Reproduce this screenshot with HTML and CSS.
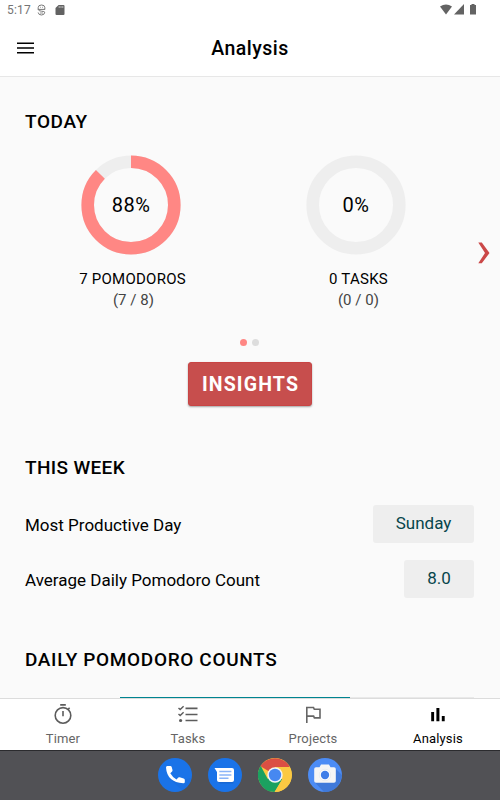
FILE: index.html
```html
<!DOCTYPE html>
<html lang="en">
	<head>
		<meta charset="utf-8"/>
		<title>Analysis</title>
		<meta name="viewport" content="width=device-width, initial-scale=1"/>
		<link rel="stylesheet" href="styles.css">
	</head>
	<body>
		<div class="status-bar">
			<span class="time">5:17</span>
			<svg class="status-debug" width="9" height="12" viewBox="0 0 9 12" fill="none" stroke="#777"><path d="M1.2 5V3.5Q1.2 1 4.5 1T7.8 3.5V5M.8 5.4h7.4M1.2 5.5Q1.5 7 4.5 7.2T7.8 8.2Q7.5 11 4.5 11T1.2 8.5"/><path d="M3 3.3h.8M5.2 3.3h.8M3 9h3" stroke-width=".8"/></svg>
			<svg class="status-card" width="10" height="12" viewBox="0 0 10 12"><path fill="#626262" d="M3.6 1H8.5Q9.5 1 9.5 2V10Q9.5 11 8.5 11H1.5Q.5 11 .5 10V4Z"/><path stroke="#ddd" stroke-width=".7" d="M4.2 2v2M6 2v2M7.8 2v2"/></svg>
			<div class="status-right">
				<svg width="36" height="12" viewBox="0 0 36 12" fill="#636363"><path d="M0 2.6Q6 -1.6 12 2.6L6 10.5Z"/><path d="M24 0V10.5H14Z"/><path d="M31.5 0h3v1H36V10.5H30V1h1.5Z"/></svg>
			</div>
		</div>
		<div class="header">
			<svg class="menu-icon" width="17" height="12" viewBox="0 0 17 12"><path stroke="#000" stroke-width="1.5" d="M0 1.2h17M0 6h17M0 10.8h17"/></svg>
			<h1>Analysis</h1>
		</div>
		<div class="content">
			<h2 class="today-title">TODAY</h2>
			<div class="today">
				<div class="stat">
					<div class="ring">
						<svg width="100" height="100" viewBox="0 0 100 100" fill="none" stroke-width="12.6"><circle cx="50" cy="50" r="43.3" stroke="#eee"/><circle cx="50" cy="50" r="43.3" stroke="#ff8784" pathLength="100" stroke-dasharray="87.5 100" transform="rotate(-90 50 50)"/></svg>
						<span class="percent">88%</span>
					</div>
					<p class="stat-name">7 POMODOROS</p>
					<p class="stat-count">(7 / 8)</p>
				</div>
				<div class="stat">
					<div class="ring">
						<svg width="100" height="100" viewBox="0 0 100 100" fill="none" stroke-width="12.6"><circle cx="50" cy="50" r="43.3" stroke="#eee"/></svg>
						<span class="percent">0%</span>
					</div>
					<p class="stat-name">0 TASKS</p>
					<p class="stat-count">(0 / 0)</p>
				</div>
				<svg class="next" width="12" height="22" viewBox="0 0 12 22"><path fill="#cb4848" d="M.3.5H3.8L11.5 11L3.8 21.3H.3L7 11Z"/></svg>
			</div>
			<div class="dots"><span class="dot active"></span><span class="dot"></span></div>
			<button class="insights">INSIGHTS</button>
			<h2 class="week-title">THIS WEEK</h2>
			<div class="row">
				<span class="row-name">Most Productive Day</span>
				<span class="value day">Sunday</span>
			</div>
			<div class="row">
				<span class="row-name">Average Daily Pomodoro Count</span>
				<span class="value count">8.0</span>
			</div>
			<h2 class="daily-title">DAILY POMODORO COUNTS</h2>
			<div class="chart"><div class="chart-line"></div><div class="chart-rest"></div></div>
		</div>
		<div class="tabs">
			<div class="tab">
				<svg width="24" height="24" viewBox="0 0 24 24" fill="none" stroke="#5c5c5c" stroke-width="1.6"><circle cx="12" cy="13.4" r="7.8"/><path d="M9.2 2.9h5.6M12 9v5.2M17.2 7.2l1.4-1.4"/></svg>
				<span>Timer</span>
			</div>
			<div class="tab">
				<svg width="24" height="24" viewBox="0 0 24 24" fill="none" stroke="#5c5c5c" stroke-width="1.6"><path d="M9.5 6.4h12M9.5 12.5h12M9.5 18.5h12"/><path d="M2.5 6l1.7 1.6L7.6 4.3M2.5 12l1.7 1.6L7.6 10.3" stroke-width="1.4"/><circle cx="4.6" cy="18.5" r="1.6" fill="#5c5c5c" stroke="none"/></svg>
				<span>Tasks</span>
			</div>
			<div class="tab">
				<svg width="24" height="24" viewBox="0 0 24 24" fill="none" stroke="#666" stroke-width="1.6"><path d="M5.8 21V5.5H12.5L13.3 7.3H19V15.9H13.4L12.6 14.1H5.8"/></svg>
				<span>Projects</span>
			</div>
			<div class="tab selected">
				<svg width="24" height="24" viewBox="0 0 24 24"><path d="M5.2 10h2.9v9.3H5.2zM10.4 6h3v13.3h-3zM15.8 14h2.9v5.3h-2.9z"/></svg>
				<span>Analysis</span>
			</div>
		</div>
		<div class="dock">
			<svg width="34" height="34" viewBox="0 0 34 34"><circle cx="17" cy="17" r="17" fill="#1a73e8"/><path fill="#1765cb" d="M11 20L24 32Q32 28 33 20L25 22Z" opacity=".25"/><path fill="#fff" d="M9.2 8H12.3Q13.4 8 13.7 9L14.5 12Q14.7 12.8 14.1 13.4L12.3 15.2Q14.5 19.2 18.5 21.4L20.3 19.6Q20.9 19 21.7 19.2L25.6 20.4Q26.8 20.8 26.8 22V24Q26.8 25.4 25.3 25.3Q9 24.2 8 9.5Q8 8 9.2 8Z"/></svg>
			<svg width="34" height="34" viewBox="0 0 34 34"><circle cx="17" cy="17" r="17" fill="#1a73e8"/><path fill="#155cbc" opacity=".5" d="M9 23L12 25.4H25L26 23Z"/><path fill="#fff" d="M6.5 10H24Q26 10 26 12V22Q26 24 24 24H11Q9 24 9 22V14Z"/><path stroke="#8ab4f8" stroke-width="1.4" d="M11.3 13.5H23.4M11.3 17H23.4M11.3 20.3H20.5"/></svg>
			<svg width="34" height="34" viewBox="0 0 34 34"><circle cx="17" cy="17" r="17" fill="#fbc942"/><path fill="#db4f43" d="M17 17L2.5 8.2A17 17 0 0 1 31.6 8.5Z"/><path fill="#1ba160" d="M2.7 7.7A17 17 0 0 0 16.5 34L24.2 21.2L17 17L9.6 20.8Z"/><path fill="#fbc942" d="M24.4 21.2L16.7 34A17 17 0 0 0 31.7 9H17V17Z"/><circle cx="17" cy="17" r="7.7" fill="#f3f5f4"/><circle cx="17" cy="17" r="6.2" fill="#4688f1"/></svg>
			<svg width="34" height="34" viewBox="0 0 34 34"><circle cx="17" cy="17" r="17" fill="#4c8cf5"/><path fill="#356ac3" opacity=".55" d="M6.5 24L16 34Q31 34 34 17L27.5 10.5V24Z"/><path fill="#f5f5f5" d="M8 9.2H11.5L13 6.5H21L22.5 9.2H26Q27.8 9.2 27.8 11V23Q27.8 24.8 26 24.8H8Q6.2 24.8 6.2 23V11Q6.2 9.2 8 9.2Z"/><circle cx="17" cy="17" r="5.7" fill="#fff" stroke="#e1e4e8" stroke-width=".6"/><circle cx="17" cy="17" r="4.2" fill="#3f7ee8"/></svg>
		</div>
	</body>
</html>
```
FILE: styles.css
```css
body{margin: 0px;width: 500px;height: 800px;overflow: hidden;display: flex;flex-direction: column;background: #fafafa;color: #000;font-family: Roboto, sans-serif;}
h1, h2, p{margin: 0px;}
svg{display: block;flex: none;}
.status-bar{display: flex;align-items: center;box-sizing: border-box;height: 20px;padding: 0 24px 0 7px;background: #fff;}
.time{width: 30px;font-size: 12px;letter-spacing: 0.2px;color: #757575;}
.status-debug{margin-right: 9px;}
.status-right{margin-left: auto;}
.header{display: grid;grid-template-columns: 50px 1fr 50px;align-items: center;height: 56px;background: #fff;border-bottom: 1px solid #e7e7e7;}
.menu-icon{margin-left: 17px;}
.header h1{padding-top: 1px;font-size: 19.5px;line-height: 24px;font-weight: 500;letter-spacing: 0.5px;text-align: center;}
.content{flex: 1;min-height: 0px;display: flex;flex-direction: column;padding: 32px 26px 0 25px;overflow: hidden;}
.content > *{flex-shrink: 0;}
h2{font-size: 19px;line-height: 24px;font-weight: 500;white-space: nowrap;}
.today-title{padding-top: 1px;letter-spacing: 0.6px;}
.today{position: relative;display: flex;height: 178px;margin: 21px -26px 0 -25px;padding: 0 18px 0 20px;}
.stat{width: 225px;display: flex;flex-direction: column;align-items: center;}
.ring{display: grid;width: 100px;height: 100px;margin-right: 3px;}
.ring svg, .percent{grid-area: 1 / 1;}
.percent{align-self: center;justify-self: center;font-size: 20px;letter-spacing: 0.5px;}
.stat-name{margin: 14px 0 0 0;font-size: 15px;line-height: 20px;letter-spacing: 0.25px;}
.stat:nth-child(2) .stat-name{margin-left: 2px;}
.stat-count{margin-left: 2px;font-size: 15px;line-height: 22px;letter-spacing: 0.05px;color: #444;}
.next{position: absolute;left: 478px;top: 87px;}
.dots{display: flex;justify-content: center;gap: 5px;margin-top: 6px;}
.dot{width: 7px;height: 7px;border-radius: 50%;background: #ddd;}
.dot.active{background: #ff8784;}
.insights{align-self: center;width: 124px;height: 44px;margin-top: 16px;padding: 1px 0 0 2px;border: 1px solid #c94444;border-radius: 3px;background: #c74e4d;box-shadow: 0 1px 2px rgba(0,0,0,0.35);color: #fff;font-family: inherit;font-size: 19.5px;font-weight: 700;letter-spacing: 1.15px;}
.week-title{margin-top: 50px;letter-spacing: 0.35px;}
.row{display: flex;align-items: center;justify-content: space-between;height: 38px;margin-top: 17px;font-size: 17px;}
.week-title + .row{margin-top: 25px;}
.row-name{padding-top: 1px;letter-spacing: 0px;}
.value{box-sizing: border-box;height: 38px;border-radius: 3px;background: #eee;color: #07454b;line-height: 37px;text-align: center;letter-spacing: 0px;}
.day{width: 101px;}
.count{width: 70px;}
.daily-title{margin-top: 50px;letter-spacing: 0.65px;}
.chart{display: flex;height: 30px;margin-top: 25px;}
.chart-line{width: 230px;height: 1px;margin-left: 95px;background: #008490;}
.chart-rest{flex: 1;height: 1px;background: #e9e9e9;}
.tabs{display: grid;grid-template-columns: repeat(4, 1fr);height: 51px;border-top: 1px solid #dcdcdc;background: #fff;}
.tab{display: flex;flex-direction: column;align-items: center;padding-top: 3px;font-size: 13px;line-height: 16px;letter-spacing: 0.15px;color: #666;}
.tab span{margin: 5px 0 0 1px;}
.selected{color: #000;}
.dock{box-sizing: border-box;display: flex;justify-content: center;gap: 16px;height: 50px;padding-top: 7px;border-top: 1px solid #2b2b2e;background: #515155;}
```
